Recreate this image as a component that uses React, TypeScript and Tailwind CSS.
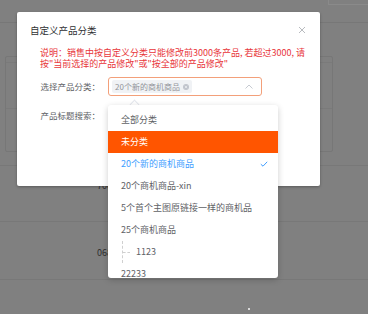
import React from 'react';

const options = [
  { label: '全部分类' },
  { label: '未分类', hover: true },
  { label: '20个新的商机商品', selected: true },
  { label: '20个商机商品-xin' },
  { label: '5个首个主图原链接一样的商机品' },
  { label: '25个商机商品' },
  { label: '1123', child: true },
  { label: '22233' },
];

const CloseIcon = () => (
  <svg width="8" height="8" viewBox="0 0 8 8" className="text-[#b0b3b8]">
    <path d="M1 1 L7 7 M7 1 L1 7" stroke="currentColor" strokeWidth="0.9" />
  </svg>
);

export default function App() {
  return (
    <div className="relative w-[368px] h-[314px] overflow-hidden bg-[#808080] font-['Noto_Sans_CJK_SC',sans-serif]">
      {/* page behind the mask */}
      <div className="h-[23px] border-b border-[#777777] flex justify-end">
        <div className="w-[40px] h-[5px] border-l border-b border-[#8a8a8a]" />
      </div>
      <div className="mt-[33px] ml-[5px] w-[328px] h-[96px] border border-[#777777] rounded-[2px]">
        <div className="h-[6px] border-b border-[#7a7a7a]" />
        <div className="h-[46px] border-b border-[#7a7a7a]" />
      </div>
      <div className="h-[14px] border-b border-[#787878]" />
      <div className="h-[56px] border-b border-[#787878] pl-[97px] pt-[14px] text-[9px] leading-[12px] text-[#2e2e2e]">706532</div>
      <div className="h-[58px] border-b border-[#787878] pl-[97px] pt-[25px] text-[9px] leading-[12px] text-[#2e2e2e]">068812</div>
      <div className="pl-[248px] pt-[28px]">
        <div className="w-[2px] h-[2px] bg-[#d9d9d9]" />
      </div>

      {/* dialog */}
      <div className="absolute left-[17px] top-[12px] w-[303px] h-[174px] bg-white rounded-[2px] shadow-[0_1px_3px_rgba(0,0,0,0.3)]">
        <div className="pt-[12px] pl-[13px] pr-[14px] flex items-center justify-between">
          <span className="text-[9.5px] leading-[12px] text-[#303133]">自定义产品分类</span>
          <CloseIcon />
        </div>
        <div className="mt-[11px] pl-[23px] text-[9px] leading-[11px] text-[#e8363a] whitespace-nowrap">
          说明：销售中按自定义分类只能修改前3000条产品, 若超过3000, 请
          <br />
          按"当前选择的产品修改"或"按全部的产品修改"
        </div>
        <div className="mt-[8px] flex items-center">
          <span className="w-[83px] text-right text-[8.5px] text-[#606266]">选择产品分类：</span>
          <div className="ml-[8px] w-[154px] h-[19px] border border-[#f3a07a] rounded-[3px] flex items-center pl-[3px] pr-[8px]">
            <div className="h-[13px] bg-[#f0f2f5] rounded-[2px] flex items-center gap-[3px] pl-[3px] pr-[3px] text-[8px] text-[#909399]">
              20个新的商机商品
              <span className="w-[6px] h-[6px] rounded-full bg-[#c0c4cc] flex items-center justify-center">
                <svg width="4" height="4" viewBox="0 0 4 4">
                  <path d="M0.8 0.8 L3.2 3.2 M3.2 0.8 L0.8 3.2" stroke="#f0f2f5" strokeWidth="0.7" />
                </svg>
              </span>
            </div>
            <svg width="8" height="5" viewBox="0 0 8 5" className="ml-auto">
              <path d="M0.5 4.5 L4 1 L7.5 4.5" fill="none" stroke="#c0c4cc" strokeWidth="0.9" />
            </svg>
          </div>
        </div>
        <div className="mt-[13px] flex items-center">
          <span className="w-[83px] text-right text-[8.5px] text-[#606266]">产品标题搜索：</span>
        </div>
      </div>

      {/* dropdown */}
      <div className="absolute left-[131px] top-[101px] w-[7px] h-[7px] rotate-45 bg-white border-l border-t border-[#e4e7ed]" />
      <div className="absolute left-[108px] top-[105px] w-[170px] h-[173px] bg-white rounded-[3px] shadow-[0_2px_6px_rgba(0,0,0,0.2)] overflow-hidden pt-[4px]">
        {options.map((o) => (
          <div
            key={o.label}
            className={`h-[22px] flex items-center text-[9px] whitespace-nowrap ${
              o.hover ? 'bg-[#ff5500] text-white' : o.selected ? 'text-[#409eff]' : 'text-[#606266]'
            } ${o.child ? 'pl-[14px]' : 'pl-[13px] pr-[10px]'}`}
          >
            {o.child ? (
              <>
                <div className="h-[22px] border-l border-dashed border-[#d0d0d0] flex items-center">
                  <div className="w-[7px] border-t border-dashed border-[#d0d0d0]" />
                </div>
                <span className="ml-[6px]">{o.label}</span>
              </>
            ) : (
              <span>{o.label}</span>
            )}
            {o.selected && (
              <svg width="8" height="6" viewBox="0 0 8 6" className="ml-auto">
                <path d="M0.8 3.2 L3 5.2 L7.2 0.8" fill="none" stroke="#409eff" strokeWidth="1" />
              </svg>
            )}
          </div>
        ))}
      </div>
    </div>
  );
}
